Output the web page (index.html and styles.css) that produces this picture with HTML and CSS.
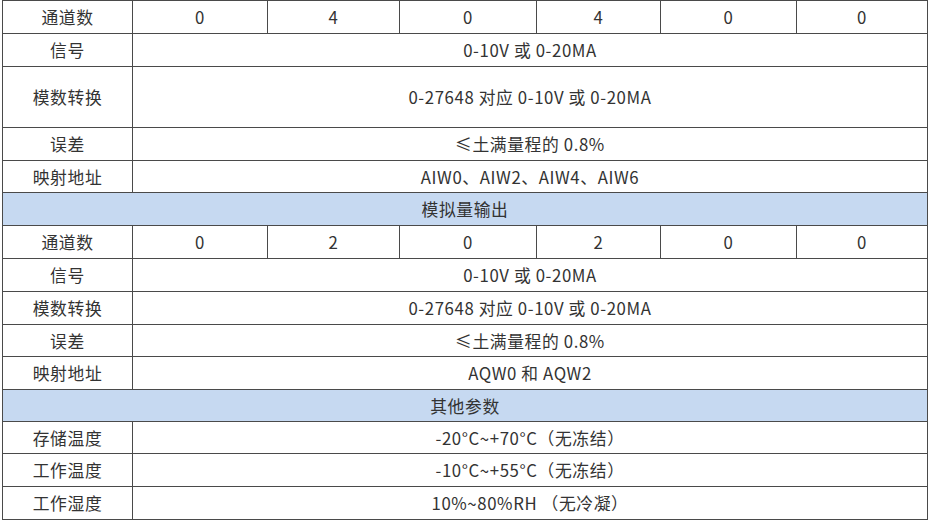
FILE: index.html
```html
<!DOCTYPE html>
<html lang="zh">
<head>
<meta charset="utf-8">
<link rel="stylesheet" href="styles.css">
</head>
<body>
<table class="spec">
<colgroup>
<col class="c0"><col class="c1"><col class="c2"><col class="c3"><col class="c4"><col class="c5"><col class="c6">
</colgroup>
<tbody>
<tr class="h33"><td>通道数</td><td>0</td><td>4</td><td>0</td><td>4</td><td>0</td><td>0</td></tr>
<tr class="h33"><td>信号</td><td colspan="6">0-10V 或 0-20MA</td></tr>
<tr class="h61"><td>模数转换</td><td colspan="6">0-27648 对应 0-10V 或 0-20MA</td></tr>
<tr class="h33"><td>误差</td><td colspan="6">≤土满量程的 0.8%</td></tr>
<tr class="h32"><td>映射地址</td><td colspan="6">AIW0、AIW2、AIW4、AIW6</td></tr>
<tr class="h33 sec"><td colspan="7">模拟量输出</td></tr>
<tr class="h33"><td>通道数</td><td>0</td><td>2</td><td>0</td><td>2</td><td>0</td><td>0</td></tr>
<tr class="h33"><td>信号</td><td colspan="6">0-10V 或 0-20MA</td></tr>
<tr class="h33"><td>模数转换</td><td colspan="6">0-27648 对应 0-10V 或 0-20MA</td></tr>
<tr class="h32"><td>误差</td><td colspan="6">≤土满量程的 0.8%</td></tr>
<tr class="h33"><td>映射地址</td><td colspan="6">AQW0 和 AQW2</td></tr>
<tr class="h32 sec"><td colspan="7">其他参数</td></tr>
<tr class="h32"><td>存储温度</td><td colspan="6">-20°C~+70°C（无冻结）</td></tr>
<tr class="h33"><td>工作温度</td><td colspan="6">-10°C~+55°C（无冻结）</td></tr>
<tr class="h33"><td>工作湿度</td><td colspan="6">10%~80%RH （无冷凝）</td></tr>
</tbody>
</table>
</body>
</html>
```
FILE: styles.css
```css
html, body {
  margin: 0;
  padding: 0;
  background: #ffffff;
}
.spec {
  margin-left: 2px;
  border-collapse: collapse;
  table-layout: fixed;
  width: 926px;
  font-family: "Noto Sans CJK SC", "Noto Sans", sans-serif;
  font-size: 16.8px;
  letter-spacing: 0.6px;
  color: #333333;
}
.c0 { width: 130px; }
.c1 { width: 135px; }
.c2 { width: 132px; }
.c3 { width: 137px; }
.c4 { width: 124px; }
.c5 { width: 136px; }
.c6 { width: 131px; }
.spec td {
  border: 1px solid #4a4a4a;
  padding: 0;
  text-align: center;
  vertical-align: middle;
  line-height: 20px;
  white-space: nowrap;
}
.h33 { height: 33px; }
.h32 { height: 32px; }
.h61 { height: 61px; }
.sec td {
  background: #c6d9f1;
}
```
